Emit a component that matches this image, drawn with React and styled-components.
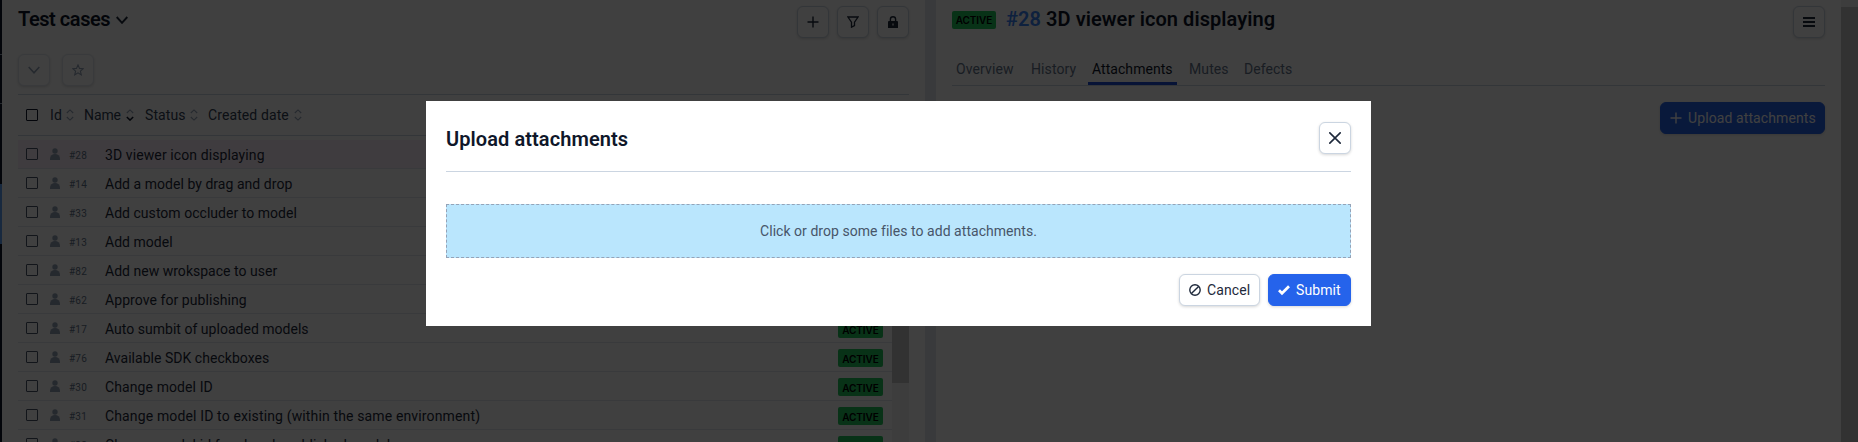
import React from "react";
import styled, { createGlobalStyle, css } from "styled-components";

const Global = createGlobalStyle`
  * { box-sizing: border-box; }
  html, body { margin: 0; height: 100%; overflow: hidden; }
  body {
    background: #fff;
    color: #1e293b;
    font: 400 14px/20px Roboto, "Liberation Sans", sans-serif;
  }
  h1, h2, p { margin: 0; }
  svg { flex: none; }
`;

const Page = styled.div`
  display: flex;
  width: 1858px;
  height: 442px;
  overflow: hidden;
`;

const Rail = styled.div`
  width: 2px;
  background: #0f172a;
  display: flex;
  flex-direction: column;
`;
const RailGap = styled.div`
  height: ${(p) => p.$h}px;
  background: ${(p) => p.$color || "transparent"};
`;

const ListPanel = styled.section`
  width: 923px;
  padding: 6px 16px 0;
  display: flex;
  flex-direction: column;
  overflow: hidden;
`;
const Splitter = styled.div`
  width: 11px;
  background: #e2e8f0;
`;
const DetailPanel = styled.section`
  width: 905px;
  padding: 6px 16px 0;
`;
const PageScrollbar = styled.div`
  width: 17px;
  background: #c8c8c8;
  border-top: 7px solid #f1f1f1;
`;

const Bar = styled.div`
  display: flex;
  flex: none;
  align-items: flex-start;
  justify-content: space-between;
  height: ${(p) => p.$h}px;
`;
const Group = styled.div`
  display: flex;
  align-items: center;
  gap: ${(p) => p.$gap}px;
`;

const Heading = styled.h1`
  font-size: 20px;
  line-height: 27px;
  font-weight: 600;
  letter-spacing: ${(p) => p.$track || 0}px;
  color: #0f172a;
  white-space: nowrap;
`;
const CaseId = styled.span`
  color: #3b82f6;
`;

const buttonTone = {
  plain: css`
    background: #fff;
    border-color: #cbd5e1;
    color: #1e293b;
  `,
  muted: css`
    background: #fff;
    border-color: #e2e8f0;
    color: #94a3b8;
  `,
  primary: css`
    background: #2563eb;
    border-color: #2563eb;
    color: #fff;
  `,
};
const Button = styled.button`
  display: flex;
  align-items: center;
  justify-content: ${(p) => (p.$w ? "flex-start" : "center")};
  gap: 6px;
  width: ${(p) => p.$w || 32}px;
  height: 32px;
  padding: 0 ${(p) => (p.$w ? 9 : 0)}px;
  border: 1px solid;
  border-radius: 6px;
  box-shadow: 0 1px 3px rgba(0, 0, 0, 0.16);
  font: inherit;
  letter-spacing: ${(p) => p.$track || 0}px;
  white-space: nowrap;
  ${(p) => buttonTone[p.$tone || "plain"]}
`;

const TableHead = styled.div`
  display: flex;
  align-items: center;
  height: 42px;
  padding-left: 8px;
  border-top: 1px solid #cbd5e1;
  border-bottom: 1px solid #cbd5e1;
  flex: none;
`;
const HeadCell = styled.div`
  display: flex;
  align-items: center;
  justify-content: space-between;
  width: ${(p) => p.$w}px;
  margin-left: ${(p) => p.$ml}px;
  letter-spacing: ${(p) => p.$track}px;
  color: #334155;
  white-space: nowrap;
`;
const Checkbox = styled.span`
  width: 12px;
  height: 12px;
  flex: none;
  border: 1px solid ${(p) => p.$color || "#475569"};
  border-radius: 1px;
`;

const TableBody = styled.div`
  display: flex;
  height: 306px;
  overflow: hidden;
`;
const Rows = styled.div`
  width: 874px;
  padding-top: 4px;
`;
const ListScrollbar = styled.div`
  width: 17px;
  background: #f1f1f1;
`;
const ListThumb = styled.div`
  height: 247px;
  background: #c8c8c8;
`;
const Row = styled.div`
  display: flex;
  align-items: center;
  height: 29px;
  padding: 0 9px 0 8px;
  border-bottom: 1px solid #e2e8f0;
  background: ${(p) => (p.$active ? "#faf0fa" : "#fff")};
`;
const Person = styled.svg`
  width: 10px;
  height: 12px;
  margin-left: 12px;
  fill: #94a3b8;
`;
const RowId = styled.span`
  width: 36px;
  margin-left: 9px;
  padding-top: 3px;
  font-size: 10px;
  letter-spacing: 0.2px;
  color: #64748b;
`;
const RowName = styled.span`
  flex: 1;
  padding-top: 2px;
  letter-spacing: ${(p) => p.$track}px;
  white-space: nowrap;
`;
const Badge = styled.span`
  display: flex;
  align-items: center;
  justify-content: center;
  width: ${(p) => p.$w || 45}px;
  height: 18px;
  margin-top: ${(p) => p.$drop || 0}px;
  padding-top: 1px;
  border-radius: 2px;
  background: #22c55e;
  color: #000;
  font-size: 10px;
  font-weight: 600;
  font-family: Inter, sans-serif;
  letter-spacing: -0.1px;
`;

const Tabs = styled.nav`
  display: flex;
  height: 31px;
  border-bottom: 1px solid #cbd5e1;
`;
const Tab = styled.span`
  width: ${(p) => p.$w}px;
  margin-right: ${(p) => p.$mr}px;
  padding: 4px 0 0 4px;
  letter-spacing: ${(p) => p.$track}px;
  color: ${(p) => (p.$on ? "#0f172a" : "#64748b")};
  border-bottom: 3px solid ${(p) => (p.$on ? "#1d4ed8" : "transparent")};
  white-space: nowrap;
`;
const Actions = styled.div`
  display: flex;
  justify-content: flex-end;
  padding-top: ${(p) => p.$top}px;
  gap: 8px;
`;

const Backdrop = styled.div`
  position: fixed;
  inset: 0;
  background: rgba(0, 0, 0, 0.75);
`;
const Modal = styled.div`
  width: 945px;
  height: 225px;
  margin: 101px 0 0 426px;
  padding: 21px 20px 20px;
  background: #fff;
`;
const ModalHead = styled.div`
  display: flex;
  justify-content: space-between;
  height: 50px;
  border-bottom: 1px solid #cbd5e1;
`;
const ModalTitle = styled(Heading).attrs({ as: "h2" })`
  padding-top: 4px;
`;
const DropZone = styled.div`
  display: flex;
  align-items: center;
  justify-content: center;
  height: 54px;
  margin-top: 32px;
  border: 1px dashed #94a3b8;
  background: #bae6fd;
  color: #475569;
  letter-spacing: ${(p) => p.$track}px;
`;

const Icon = ({ size = 12, w = 1.4, children, h }) => (
  <svg
    width={size}
    height={h || size}
    viewBox={`0 0 ${size} ${h || size}`}
    fill="none"
    stroke="currentColor"
    strokeWidth={w}
  >
    {children}
  </svg>
);
const Chevron = ({ w = 1.6 }) => <Icon w={w} h={8}><path d="M.7 1 6 6.8 11.3 1" /></Icon>;
const Plus = () => <Icon><path d="M6 .5v11M.5 6h11" /></Icon>;
const Sort = ({ desc }) => (
  <svg width="8" height="12" viewBox="0 0 8 12" fill="none" strokeWidth="1.1">
    <path d="M.8 4 4 .9 7.2 4" stroke="#94a3b8" />
    <path d="M.8 8 4 11.1 7.2 8" stroke={desc ? "#0f172a" : "#94a3b8"} strokeWidth={desc ? 1.5 : 1.1} />
  </svg>
);

const cases = [
  ["28", "3D viewer icon displaying", 0.1],
  ["14", "Add a model by drag and drop", 0.04],
  ["33", "Add custom occluder to model", 0.03],
  ["13", "Add model", 0.02],
  ["82", "Add new wrokspace to user", 0.02],
  ["62", "Approve for publishing", 0.07],
  ["17", "Auto sumbit of uploaded models", 0.02],
  ["76", "Available SDK checkboxes", 0.03],
  ["30", "Change model ID", 0.1],
  ["31", "Change model ID to existing (within the same environment)", 0.14],
  ["32", "Change model id for already published model", 0.1],
];

export default function App() {
  return (
    <>
      <Global />
      <Page>
        <Rail>
          <RailGap $h={54} /><RailGap $h={1} $color="#94a3b8" />
          <RailGap $h={48} /><RailGap $h={1} $color="#94a3b8" />
          <RailGap $h={80} /><RailGap $h={60} $color="#60a5fa" />
        </Rail>
        <ListPanel>
          <Bar $h={48}>
            <Group $gap={6}>
              <Heading $track={-0.45}>Test cases</Heading>
              <Chevron w={1.9} />
            </Group>
            <Group $gap={8}>
              <Button><Plus /></Button>
              <Button>
                <Icon w={1.3}><path d="M.9 1h10.2L7.5 6.2v3.5l-3 1.5V6.2z" /></Icon>
              </Button>
              <Button>
                <svg width="10" height="12" viewBox="0 0 10 12">
                  <path d="M2.4 6V3.3a2.6 2.6 0 0 1 5.2 0V6" fill="none" stroke="currentColor" strokeWidth="1.4" />
                  <path
                    fillRule="evenodd"
                    d="M1 5h8a1 1 0 0 1 1 1v6H0V6a1 1 0 0 1 1-1zm3.4 2.6v1.8h1.2V7.6z"
                    fill="currentColor"
                  />
                </svg>
              </Button>
            </Group>
          </Bar>
          <Bar $h={40}>
            <Group $gap={12}>
              <Button $tone="muted"><Chevron /></Button>
              <Button $tone="muted">
                <Icon w={1.1}>
                  <path d="m6 .9 1.5 3.5 3.8.3-2.9 2.5.9 3.7L6 8.9l-3.3 2 .9-3.7L.7 4.7l3.8-.3z" />
                </Icon>
              </Button>
            </Group>
          </Bar>
          <TableHead>
            <Checkbox $color="#0f172a" />
            <HeadCell $ml={12} $w={24} $track={0.2}>Id<Sort /></HeadCell>
            <HeadCell $ml={10} $w={50} $track={-0.1}>Name<Sort desc /></HeadCell>
            <HeadCell $ml={11} $w={53} $track={0.1}>Status<Sort /></HeadCell>
            <HeadCell $ml={10} $w={94} $track={0.1}>Created date<Sort /></HeadCell>
          </TableHead>
          <TableBody>
            <Rows>
              {cases.map(([id, name, track], i) => (
                <Row key={id} $active={i === 0}>
                  <Checkbox />
                  <Person viewBox="0 0 10 12">
                    <circle cx="5" cy="3" r="2.7" />
                    <path d="M0 12v-1.5a4 3.6 0 0 1 10 0V12z" />
                  </Person>
                  <RowId>#{id}</RowId>
                  <RowName $track={track}>{name}</RowName>
                  <Badge $drop={2}>ACTIVE</Badge>
                </Row>
              ))}
            </Rows>
            <ListScrollbar><ListThumb /></ListScrollbar>
          </TableBody>
        </ListPanel>
        <Splitter />
        <DetailPanel>
          <Bar $h={49}>
            <Group $gap={10}>
              <Badge $w={44}>ACTIVE</Badge>
              <Heading $track={0.06}><CaseId>#28</CaseId> 3D viewer icon displaying</Heading>
            </Group>
            <Button>
              <Icon w={2}><path d="M0 2h12M0 6h12M0 10h12" /></Icon>
            </Button>
          </Bar>
          <Tabs>
            <Tab $w={65} $mr={10} $track={0.1}>Overview</Tab>
            <Tab $w={52} $mr={9} $track={0.1}>History</Tab>
            <Tab $w={89} $mr={8} $track={0.05} $on>Attachments</Tab>
            <Tab $w={46} $mr={9} $track={0.1}>Mutes</Tab>
            <Tab $w={60} $mr={0} $track={0.05}>Defects</Tab>
          </Tabs>
          <Actions $top={16}>
            <Button $w={165} $tone="primary" $track={0.1}><Plus />Upload attachments</Button>
          </Actions>
        </DetailPanel>
        <PageScrollbar />
      </Page>
      <Backdrop>
        <Modal>
          <ModalHead>
            <ModalTitle $track={0.08}>Upload attachments</ModalTitle>
            <Button><Icon w={1.6}><path d="m.3.3 11.4 11.4M11.7.3.3 11.7" /></Icon></Button>
          </ModalHead>
          <DropZone $track={0.04}>Click or drop some files to add attachments.</DropZone>
          <Actions $top={16}>
            <Button $w={81} $track={0.1}>
              <Icon><circle cx="6" cy="6" r="5.2" /><path d="M2.4 9.6 9.6 2.4" /></Icon>Cancel
            </Button>
            <Button $w={83} $tone="primary" $track={0.1}>
              <Icon w={2.7}><path d="m1 6.3 3 3L11 2.2" /></Icon>Submit
            </Button>
          </Actions>
        </Modal>
      </Backdrop>
    </>
  );
}
